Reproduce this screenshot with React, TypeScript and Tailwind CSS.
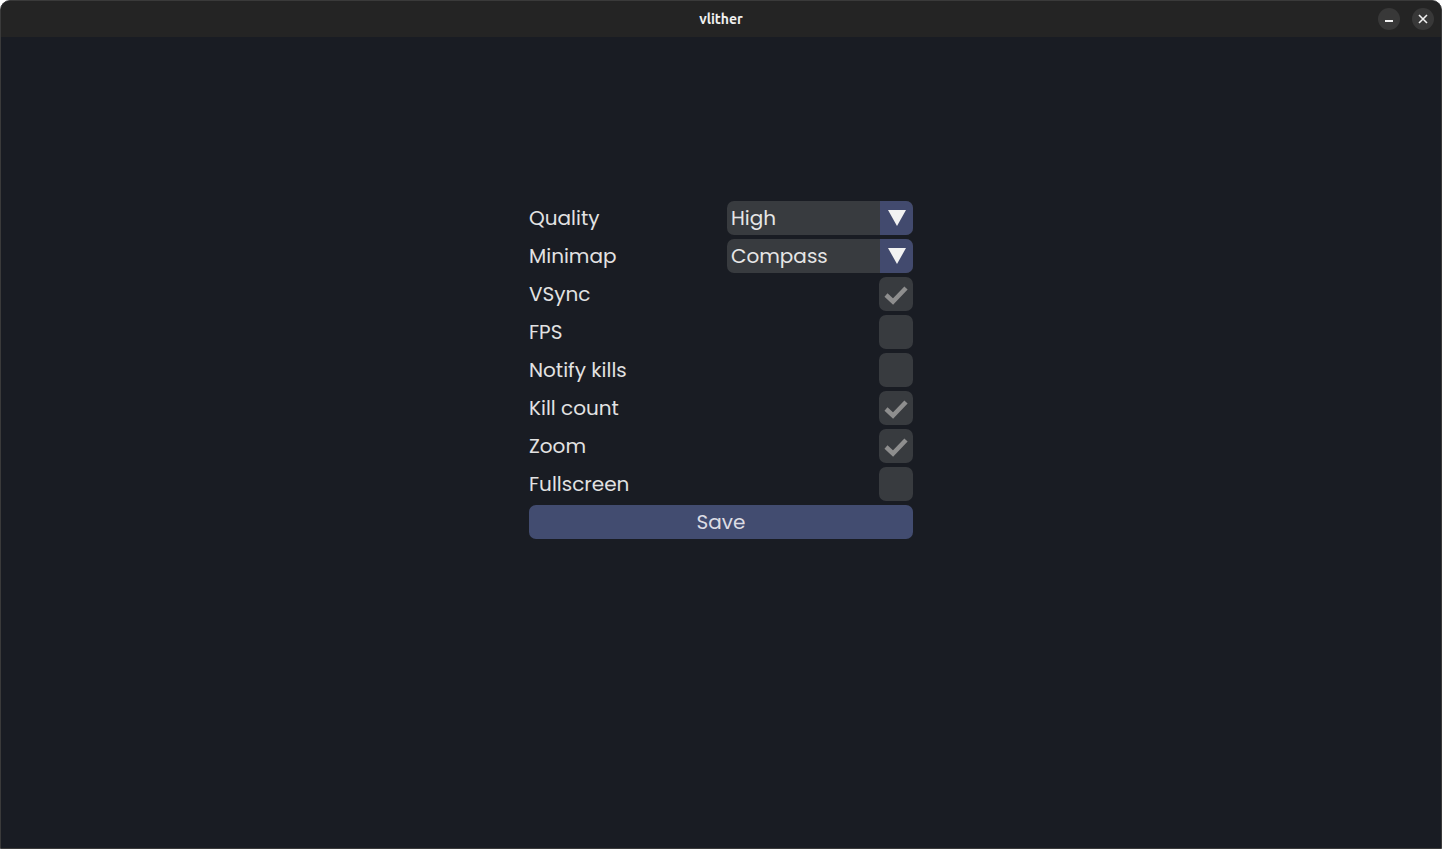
import { useState } from 'react';

const font = { fontFamily: '"Poppins", "Open Sans", "Noto Sans", sans-serif' };

function Check() {
  return (
    <svg width="26" height="22" viewBox="0 0 26 22">
      <path d="M3 12 L10 18.5 L23 5" fill="none" stroke="#8e8e8e" strokeWidth="4.5" strokeLinecap="butt" strokeLinejoin="miter" />
    </svg>
  );
}

function Select({ value }: { value: string }) {
  return (
    <div className="flex h-[34px] w-[186px] overflow-hidden rounded-[7px] bg-[#383b3f]">
      <div className="flex flex-1 items-center pl-[4px] text-[20px] text-[#e6e6e6]">{value}</div>
      <div className="flex w-[33px] items-center justify-center bg-[#424a6e]">
        <svg width="20" height="18" viewBox="0 0 20 18">
          <path d="M1 1 L19 1 L10 17 Z" fill="#f2f2f2" />
        </svg>
      </div>
    </div>
  );
}

function Box({ on }: { on: boolean }) {
  return (
    <div className="flex h-[34px] w-[34px] items-center justify-center rounded-[7px] bg-[#383b3f]">
      {on && <Check />}
    </div>
  );
}

export default function App() {
  const [opts] = useState([
    { label: 'VSync', on: true },
    { label: 'FPS', on: false },
    { label: 'Notify kills', on: false },
    { label: 'Kill count', on: true },
    { label: 'Zoom', on: true },
    { label: 'Fullscreen', on: false },
  ]);

  return (
    <div className="flex h-[849px] w-[1442px] flex-col overflow-hidden rounded-t-[10px] border border-[#3a3a3a] bg-[#191c23]">
      {/* title bar */}
      <div className="relative flex h-[36px] shrink-0 items-center justify-center bg-[#242424]">
        <span className="text-[14px] font-bold text-[#f0f0f0]" style={{ fontFamily: '"Ubuntu", "DejaVu Sans", sans-serif' }}>
          vlither
        </span>
        <div className="absolute right-[7px] top-[7px] flex gap-[12px]">
          <div className="flex h-[22px] w-[22px] items-center justify-center rounded-full bg-[#383838]">
            <div className="mt-[4px] h-[1.5px] w-[8px] bg-[#f0f0f0]" />
          </div>
          <div className="flex h-[22px] w-[22px] items-center justify-center rounded-full bg-[#383838]">
            <svg width="10" height="10" viewBox="0 0 10 10">
              <path d="M1 1 L9 9 M9 1 L1 9" stroke="#f0f0f0" strokeWidth="1.6" />
            </svg>
          </div>
        </div>
      </div>

      {/* settings */}
      <div className="flex flex-1 justify-center pt-[164px]">
        <div className="flex w-[384px] flex-col gap-[4px]" style={font}>
          <div className="flex h-[34px] items-center justify-between">
            <span className="text-[20px] text-[#e2e2e2]">Quality</span>
            <Select value="High" />
          </div>
          <div className="flex h-[34px] items-center justify-between">
            <span className="text-[20px] text-[#e2e2e2]">Minimap</span>
            <Select value="Compass" />
          </div>
          {opts.map((o) => (
            <div key={o.label} className="flex h-[34px] items-center justify-between">
              <span className="text-[20px] text-[#e2e2e2]">{o.label}</span>
              <Box on={o.on} />
            </div>
          ))}
          <button className="h-[34px] w-full rounded-[7px] bg-[#424c70] text-[20px] text-[#dcdce4]">Save</button>
        </div>
      </div>
    </div>
  );
}
